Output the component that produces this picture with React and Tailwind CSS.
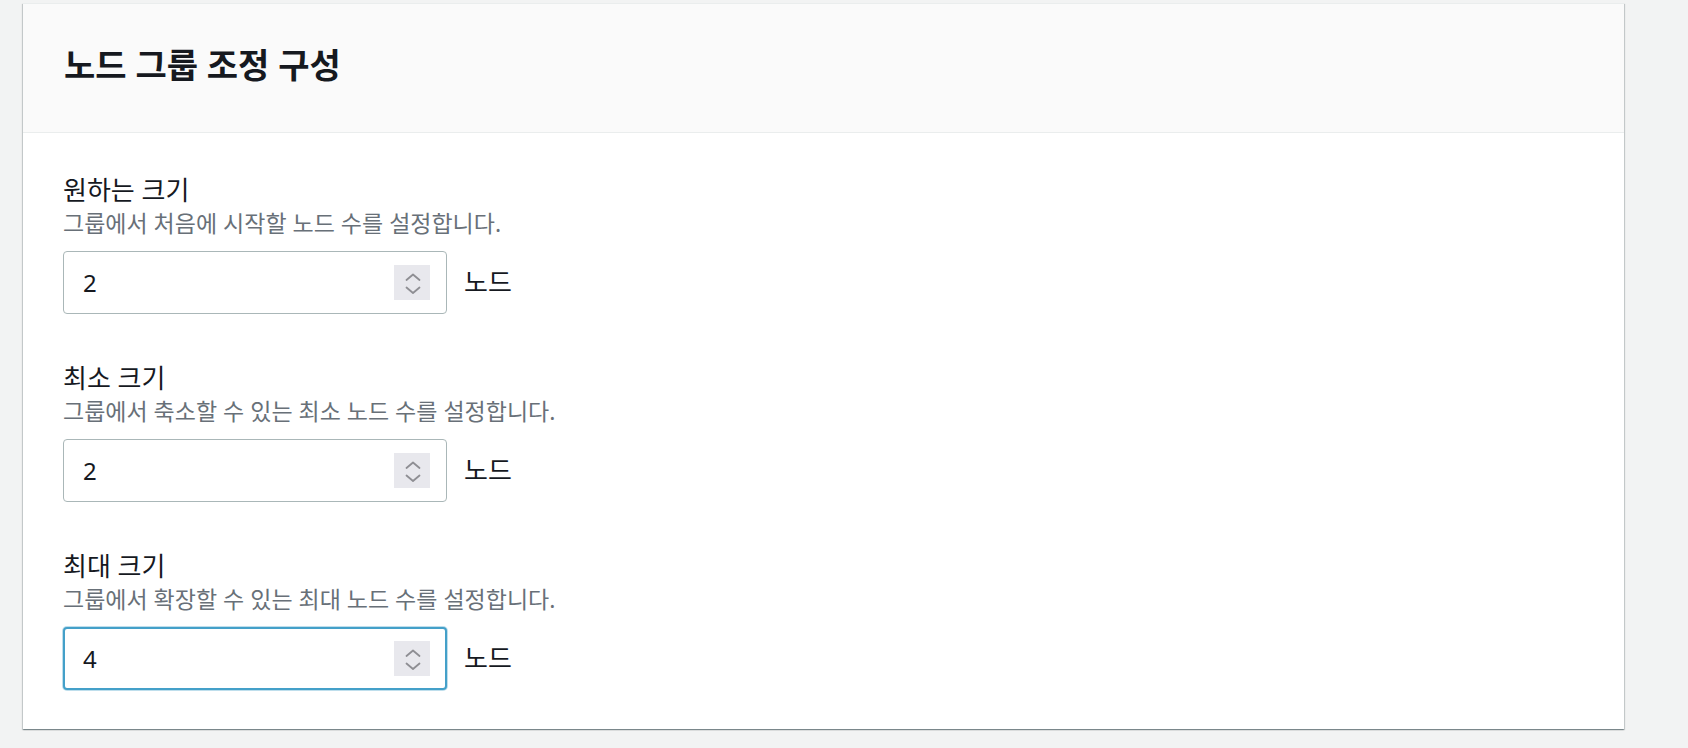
const fields = [
  { label: "원하는 크기", desc: "그룹에서 처음에 시작할 노드 수를 설정합니다.", value: "2" },
  { label: "최소 크기", desc: "그룹에서 축소할 수 있는 최소 노드 수를 설정합니다.", value: "2" },
  { label: "최대 크기", desc: "그룹에서 확장할 수 있는 최대 노드 수를 설정합니다.", value: "4", focused: true },
];

function Spinner() {
  return (
    <div className="w-[36px] h-[35px] bg-[#e8e8ed] shrink-0">
      <svg width="36" height="35" viewBox="0 0 36 35" fill="none" stroke="#8e8e93" strokeWidth="1.8" strokeLinecap="round" strokeLinejoin="round">
        <path d="M12.5 15 L19 9.5 L25.5 15" />
        <path d="M12.5 22.5 L19 28 L25.5 22.5" />
      </svg>
    </div>
  );
}

function NumberField({ label, desc, value, focused }) {
  return (
    <div className="flex flex-col">
      <div className="text-[26px] leading-[36px] text-[#16191f]">{label}</div>
      <div className="text-[23px] leading-[31px] text-[#687078]">{desc}</div>
      <div className="flex items-center mt-[12px]">
        <div
          className={
            focused
              ? "w-[384px] h-[63px] rounded-[4px] border-2 border-[#44a0c9] shadow-[0_0_0_1px_rgba(68,160,201,0.35)] bg-white flex items-center pl-[18px] pr-[15px]"
              : "w-[384px] h-[63px] rounded-[4px] border border-[#aab7b8] bg-white flex items-center pl-[19px] pr-[16px]"
          }
        >
          <span className="flex-1 text-[24px] text-[#16191f]">{value}</span>
          <Spinner />
        </div>
        <span className="ml-[17px] text-[26px] text-[#16191f]">노드</span>
      </div>
    </div>
  );
}

export default function App() {
  return (
    <div className="min-h-screen bg-[#f2f3f3] pt-[3px] font-['Noto_Sans','Noto_Sans_CJK_KR',sans-serif]">
      <div className="ml-[23px] w-[1601px] bg-white border-t border-[#eaeded] shadow-[0_1px_1px_0_rgba(0,28,36,0.3),1px_1px_1px_0_rgba(0,28,36,0.15),-1px_1px_1px_0_rgba(0,28,36,0.15)]">
        <div className="h-[129px] bg-[#fafafa] border-b border-[#eaeded] flex items-center pl-[41px] pb-[6px]">
          <h2 className="text-[34px] font-bold text-[#16191f]">노드 그룹 조정 구성</h2>
        </div>
        <div className="pl-[40px] pt-[39px] pb-[39px] flex flex-col gap-[46px]">
          {fields.map((f) => (
            <NumberField key={f.label} {...f} />
          ))}
        </div>
      </div>
    </div>
  );
}
